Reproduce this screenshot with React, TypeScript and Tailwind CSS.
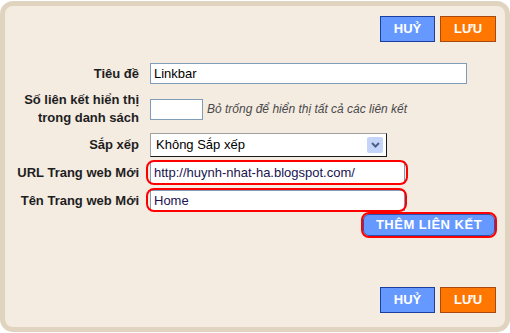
const FONT = "font-['Liberation_Sans',Arial,sans-serif]";

function ActionButtons() {
  return (
    <div className="flex justify-end gap-[5px] pr-[9px]">
      <button className="h-[26px] w-[55px] border border-[#1a3fa0] bg-[#6699ff] text-[13px] font-bold text-white">
        HUỶ
      </button>
      <button className="h-[26px] w-[56px] border border-[#a84a10] bg-[#ff7700] text-[13px] font-bold text-white">
        LƯU
      </button>
    </div>
  );
}

function Label({ children }: { children: React.ReactNode }) {
  return (
    <div className="w-[134px] shrink-0 text-right text-[13px] font-bold leading-[18px] text-[#1e1e1e]">
      {children}
    </div>
  );
}

export default function App() {
  return (
    <div className={`h-[333px] w-[510px] bg-white pt-px ${FONT}`}>
      <div className="flex h-[331px] w-[510px] flex-col rounded-[13px] border-[5px] border-[#e0d4c1] bg-[#f4ebe1]">
        <div className="mt-[10px]">
          <ActionButtons />
        </div>

        {/* Tiêu đề */}
        <div className="mt-[21px] flex items-center gap-[11px]">
          <Label>Tiêu đề</Label>
          <input
            readOnly
            value="Linkbar"
            className="h-[21px] w-[317px] border border-[#7f9db9] bg-white px-[3px] text-[13px] text-black outline-none"
          />
        </div>

        {/* Số liên kết */}
        <div className="mt-[7px] flex items-center gap-[11px]">
          <Label>
            Số liên kết hiển thị
            <br />
            trong danh sách
          </Label>
          <input
            readOnly
            value=""
            className="h-[21px] w-[53px] border border-[#7f9db9] bg-white outline-none"
          />
          <span className="-ml-[7px] text-[12px] italic text-[#4a4a4a]">
            Bỏ trống để hiển thị tất cả các liên kết
          </span>
        </div>

        {/* Sắp xếp */}
        <div className="mt-[6px] flex items-center gap-[11px]">
          <Label>Sắp xếp</Label>
          <div className="flex h-[24px] w-[237px] items-center justify-between border border-b-[#1a1a1a] border-l-[#a0a0a0] border-r-[#1a1a1a] border-t-[#a0a0a0] bg-white pl-[5px] pr-[3px]">
            <span className="text-[13px] text-black">Không Sắp xếp</span>
            <span className="flex h-[16px] w-[16px] items-center justify-center rounded-[2px] bg-[#c5d5fa]">
              <svg width="9" height="6" viewBox="0 0 9 6">
                <path d="M1 1 L4.5 4.5 L8 1" fill="none" stroke="#4d6185" strokeWidth="2" />
              </svg>
            </span>
          </div>
        </div>

        {/* URL */}
        <div className="mt-[4px] flex items-center gap-[11px]">
          <Label>URL Trang web Mới</Label>
          <div className="relative">
            <input
              readOnly
              value="http://huynh-nhat-ha.blogspot.com/"
              className="block h-[23px] w-[255px] border border-[#7f9db9] bg-white px-[3px] text-[13px] text-[#1b1350] outline-none"
            />
            <div className="absolute -bottom-[1px] -left-[4px] -right-[3px] -top-[1px] rounded-[8px] border-2 border-[#ff0000]" />
          </div>
        </div>

        {/* Tên */}
        <div className="mt-[6px] flex items-center gap-[11px]">
          <Label>Tên Trang web Mới</Label>
          <div className="relative">
            <input
              readOnly
              value="Home"
              className="block h-[21px] w-[255px] border border-[#7f9db9] bg-white px-[3px] text-[13px] text-[#1b1350] outline-none"
            />
            <div className="absolute -bottom-[1px] -left-[4px] -right-[2px] -top-[2px] rounded-[8px] border-2 border-[#ff0000]" />
          </div>
        </div>

        {/* Thêm liên kết */}
        <div className="mt-[3px] flex justify-end pr-[10px]">
          <div className="relative">
            <button className="block h-[22px] w-[132px] rounded-[6px] border border-[#2a50b0] bg-[#6699ff] text-[13px] font-bold tracking-[0.5px] text-white">
              THÊM LIÊN KẾT
            </button>
            <div className="absolute -inset-[2px] rounded-[8px] border-2 border-[#ff0000]" />
          </div>
        </div>

        <div className="mb-[14px] mt-auto">
          <ActionButtons />
        </div>
      </div>
    </div>
  );
}
